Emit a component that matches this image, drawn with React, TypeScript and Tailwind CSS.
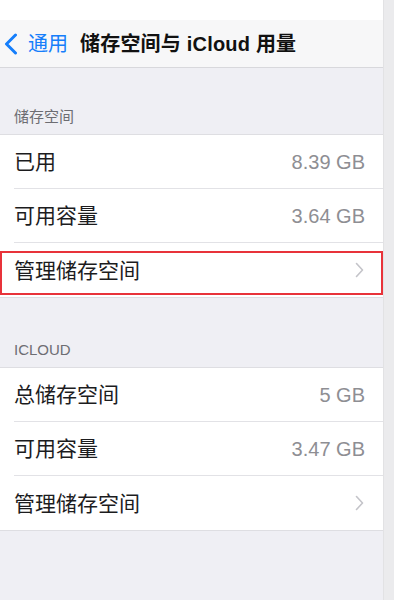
const font = { fontFamily: '"Liberation Sans", "Noto Sans CJK SC", sans-serif' };

type Row = { label: string; value?: string; chevron?: boolean; marked?: boolean };

const storageRows: Row[] = [
  { label: '已用', value: '8.39 GB' },
  { label: '可用容量', value: '3.64 GB' },
  { label: '管理储存空间', chevron: true, marked: true },
];

const icloudRows: Row[] = [
  { label: '总储存空间', value: '5 GB' },
  { label: '可用容量', value: '3.47 GB' },
  { label: '管理储存空间', chevron: true },
];

function Chevron() {
  return (
    <svg width="9" height="16" viewBox="0 0 9 16" fill="none">
      <polyline points="1.5,1.5 7.5,8 1.5,14.5" stroke="#c4c4c9" strokeWidth="1.6" strokeLinecap="round" strokeLinejoin="round" />
    </svg>
  );
}

function Group({ rows }: { rows: Row[] }) {
  return (
    <div className="bg-white border-y border-[#dedee2]">
      {rows.map((r, i) => (
        <div key={i} className="relative h-[54px] pl-[14px] flex">
          <div
            className={`flex-1 flex items-center justify-between ${r.chevron ? 'pr-[19px]' : 'pr-[18px]'} ${
              i < rows.length - 1 ? 'border-b border-[#e2e2e6]' : ''
            }`}
          >
            <span className="text-[21px] text-[#1c1c1e] leading-none">{r.label}</span>
            {r.value && <span className="text-[20px] text-[#8e8e93] leading-none">{r.value}</span>}
            {r.chevron && <Chevron />}
          </div>
          {r.marked && (
            <div className="absolute left-0 right-0 top-[8px] bottom-[2px] border-2 border-[#e8333a]" />
          )}
        </div>
      ))}
    </div>
  );
}

export default function App() {
  return (
    <div className="w-[400px] h-[600px] flex bg-white overflow-hidden" style={font}>
      <div className="w-[383px] flex flex-col bg-[#efeff4]">
        {/* status bar space */}
        <div className="h-[20px] bg-white" />

        {/* Nav bar */}
        <div className="h-[48px] bg-[#f7f7f8] border-b border-[#d8d8dc] flex items-center">
          <svg width="14" height="22" viewBox="0 0 14 22" className="ml-[4px]" fill="none">
            <polyline points="11.5,2 2.5,11 11.5,20" stroke="#157efb" strokeWidth="3" strokeLinecap="round" strokeLinejoin="round" />
          </svg>
          <span className="ml-[10px] text-[20px] text-[#157efb] leading-none">通用</span>
          <span className="ml-[12px] text-[20px] font-semibold text-[#111] leading-none tracking-[0.2px]">储存空间与 iCloud 用量</span>
        </div>

        {/* Storage section */}
        <div className="h-[66px] flex items-end pl-[14px] pb-[8px]">
          <span className="text-[15px] leading-[18px] text-[#6d6d72]">储存空间</span>
        </div>
        <Group rows={storageRows} />

        {/* iCloud section */}
        <div className="h-[69px] flex items-end pl-[14px] pb-[8px]">
          <span className="text-[15px] leading-[18px] text-[#6d6d72]">ICLOUD</span>
        </div>
        <Group rows={icloudRows} />

        <div className="flex-1" />
      </div>
      <div className="w-[11px] bg-[#ebebed] border-l border-[#e2e2e4]" />
      <div className="flex-1 bg-white" />
    </div>
  );
}
